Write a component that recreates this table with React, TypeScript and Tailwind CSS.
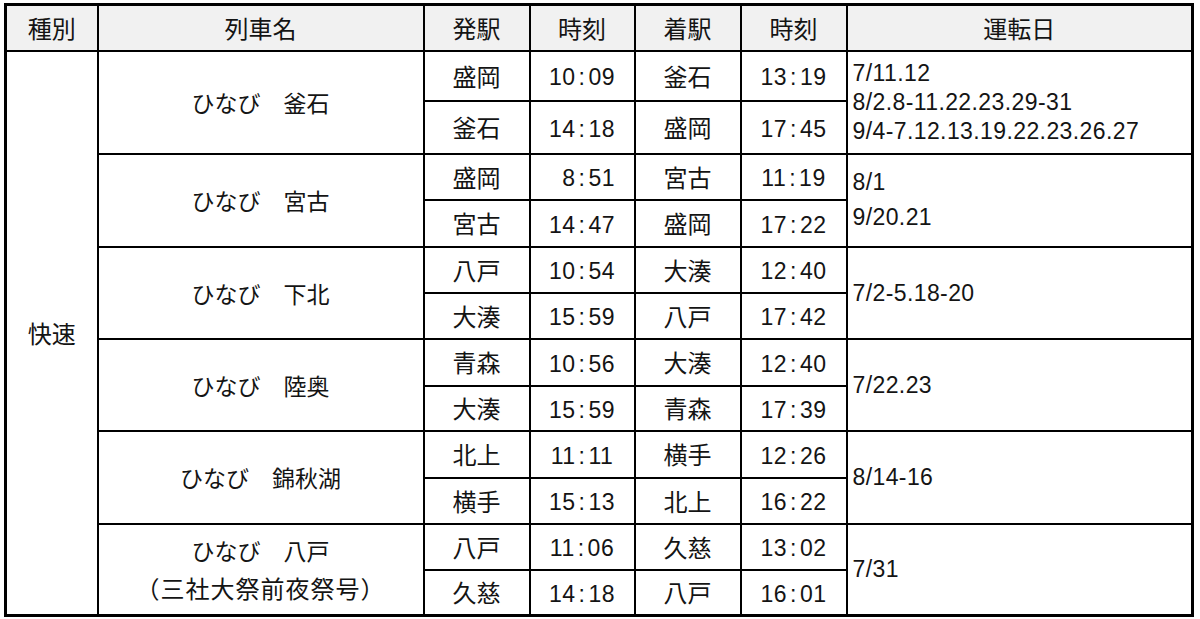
import * as React from "react";

const JP = { fontFamily: '"Noto Sans CJK JP", "Noto Sans", sans-serif' };
const NUM = { fontFamily: '"Liberation Sans", Arial, sans-serif' };

type Trip = { from: string; dep: string; to: string; arr: string };
type Train = { name: string[]; heights: [number, number]; trips: [Trip, Trip]; days: string[]; leading: string };

const TRAINS: Train[] = [
  {
    name: ["ひなび　釜石"],
    heights: [50, 53],
    trips: [
      { from: "盛岡", dep: "10:09", to: "釜石", arr: "13:19" },
      { from: "釜石", dep: "14:18", to: "盛岡", arr: "17:45" },
    ],
    days: ["7/11.12", "8/2.8-11.22.23.29-31", "9/4-7.12.13.19.22.23.26.27"],
    leading: "leading-[29px]",
  },
  {
    name: ["ひなび　宮古"],
    heights: [46, 47],
    trips: [
      { from: "盛岡", dep: "8:51", to: "宮古", arr: "11:19" },
      { from: "宮古", dep: "14:47", to: "盛岡", arr: "17:22" },
    ],
    days: ["8/1", "9/20.21"],
    leading: "leading-[35px]",
  },
  {
    name: ["ひなび　下北"],
    heights: [46, 46],
    trips: [
      { from: "八戸", dep: "10:54", to: "大湊", arr: "12:40" },
      { from: "大湊", dep: "15:59", to: "八戸", arr: "17:42" },
    ],
    days: ["7/2-5.18-20"],
    leading: "leading-[30px]",
  },
  {
    name: ["ひなび　陸奥"],
    heights: [47, 45],
    trips: [
      { from: "青森", dep: "10:56", to: "大湊", arr: "12:40" },
      { from: "大湊", dep: "15:59", to: "青森", arr: "17:39" },
    ],
    days: ["7/22.23"],
    leading: "leading-[30px]",
  },
  {
    name: ["ひなび　錦秋湖"],
    heights: [47, 46],
    trips: [
      { from: "北上", dep: "11:11", to: "横手", arr: "12:26" },
      { from: "横手", dep: "15:13", to: "北上", arr: "16:22" },
    ],
    days: ["8/14-16"],
    leading: "leading-[30px]",
  },
  {
    name: ["ひなび　八戸", "（三社大祭前夜祭号）"],
    heights: [46, 46],
    trips: [
      { from: "八戸", dep: "11:06", to: "久慈", arr: "13:02" },
      { from: "久慈", dep: "14:18", to: "八戸", arr: "16:01" },
    ],
    days: ["7/31"],
    leading: "leading-[37px]",
  },
];

function Time({ t }: { t: string }) {
  const [h, m] = t.split(":");
  return (
    <span style={NUM} className="relative top-[2px] text-[23px] tracking-[0.5px]">
      {h.length === 1 && <span className="invisible">0</span>}
      {h}
      <span className="mx-[3px]">:</span>
      {m}
    </span>
  );
}

const cell = "border-2 border-black p-0 align-middle";

export default function App() {
  return (
    <div className="min-h-screen bg-white pl-[4px] pt-[3px] text-[#141414]">
      <table className="table-fixed border-collapse border-[3px] border-black w-[1190px]">
        <colgroup>
          <col className="w-[92px]" />
          <col className="w-[326px]" />
          <col className="w-[106px]" />
          <col className="w-[105px]" />
          <col className="w-[106px]" />
          <col className="w-[106px]" />
          <col className="w-[346px]" />
        </colgroup>
        <thead>
          <tr className="h-[46px] bg-[#f1f1f1]" style={JP}>
            {["種別", "列車名", "発駅", "時刻", "着駅", "時刻", "運転日"].map((h, i) => (
              <th key={i} className={`${cell} text-center text-[24px] font-normal`}>
                {h}
              </th>
            ))}
          </tr>
        </thead>
        <tbody>
          {TRAINS.map((train, ti) =>
            train.trips.map((trip, ri) => (
              <tr key={`${ti}-${ri}`} style={{ height: train.heights[ri] }}>
                {ti === 0 && ri === 0 && (
                  <td rowSpan={12} className={`${cell} text-center text-[24px]`} style={JP}>
                    快速
                  </td>
                )}
                {ri === 0 && (
                  <td rowSpan={2} className={`${cell} text-center text-[23px] ${train.leading}`} style={JP}>
                    {train.name.map((n, i) => (
                      <div key={i} className={i === 1 ? "text-[24px] tracking-[1px]" : ""}>
                        {n}
                      </div>
                    ))}
                  </td>
                )}
                <td className={`${cell} text-center text-[24px]`} style={JP}>
                  {trip.from}
                </td>
                <td className={`${cell} text-center`}>
                  <Time t={trip.dep} />
                </td>
                <td className={`${cell} text-center text-[24px]`} style={JP}>
                  {trip.to}
                </td>
                <td className={`${cell} text-center`}>
                  <Time t={trip.arr} />
                </td>
                {ri === 0 && (
                  <td rowSpan={2} className={`${cell} pl-[5px] text-left text-[23px] tracking-[0.4px] ${train.leading}`} style={NUM}>
                    {train.days.map((d, i) => (
                      <div key={i}>{d}</div>
                    ))}
                  </td>
                )}
              </tr>
            ))
          )}
        </tbody>
      </table>
    </div>
  );
}
